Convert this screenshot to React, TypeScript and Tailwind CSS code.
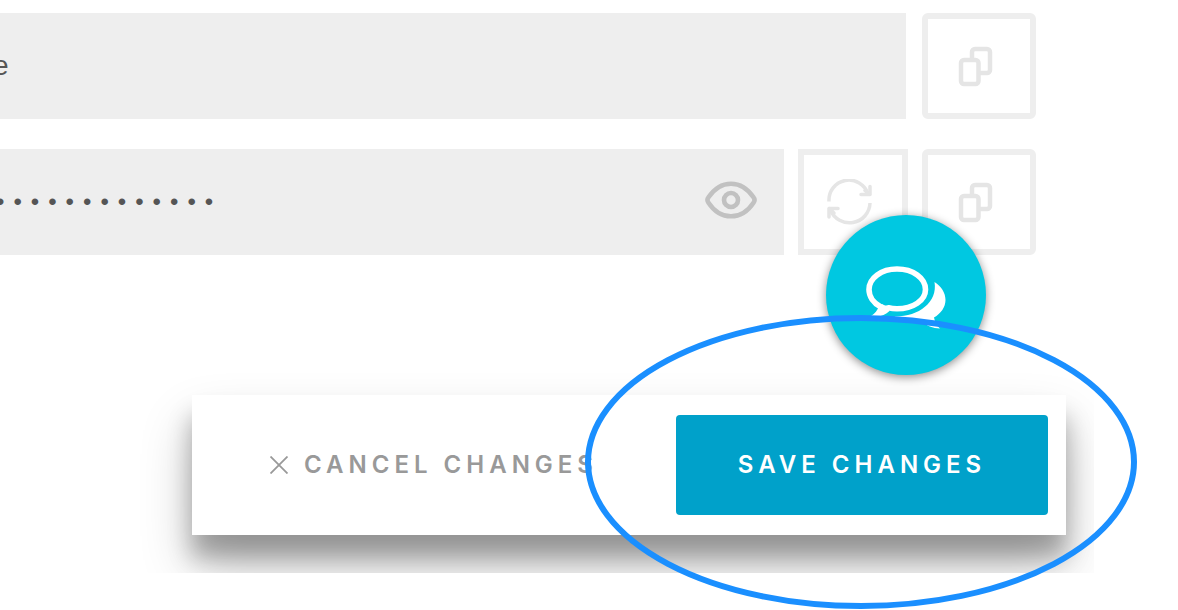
import React from "react";

function CopyIcon() {
  return (
    <svg width="36" height="42" viewBox="-1 -1 36 42" fill="none" stroke="#e5e5e5" strokeWidth="4.500" aria-hidden="true">
      <path d="M14 12V6a3 3 0 0 1 3-3h12a3 3 0 0 1 3 3v18a3 3 0 0 1-3 3h-7" />
      <rect x="3" y="14" width="17.500" height="24" rx="3" />
    </svg>
  );
}

function RefreshIcon() {
  return (
    <svg width="46" height="46" viewBox="0 0 46 46" fill="none" stroke="#e5e5e5" strokeWidth="3.500" strokeLinejoin="round" aria-hidden="true">
      <path d="M3 22.500A20 20 0 0 1 42 15" />
      <path d="M44 24A20.500 20.500 0 0 1 4.500 31" />
      <path d="M44 7.500v8h-9M39 11.500l5 4" strokeLinecap="round" />
      <path d="M3 38V29.500h9M8 34L3 29.500" strokeLinecap="round" />
    </svg>
  );
}

function EyeIcon() {
  return (
    <svg width="52" height="38" viewBox="0 0 52 38" fill="none" stroke="#c1c1c1" aria-hidden="true">
      <path
        d="M3.300 21.400C8 28.500 16 35.300 26 35.300S44 28.500 48.700 21.400C49.900 19.700 49.900 18.300 48.700 16.600C44 9.500 36 2.700 26 2.700S8 9.500 3.300 16.600C2.100 18.300 2.100 19.700 3.300 21.400Z"
        strokeWidth="4.600"
      />
      <circle cx="26" cy="19" r="7" strokeWidth="4.600" />
    </svg>
  );
}

function ChatIcon() {
  return (
    <svg width="82" height="74" viewBox="0 -8 82 74" aria-hidden="true">
      <path
        d="M32 3C16.500 3 4 12 4 23.500C4 30.500 8.500 37 15.500 40.700L18 43L23.500 41.800C26.200 42.500 29 42.800 32 42.800C48 42.800 60.500 34.500 60.500 23.500C60.500 12 48 3 32 3Z"
        fill="none"
        stroke="#fff"
        strokeWidth="5.600"
      />
      <path d="M14 40C12.500 44.500 10 47.500 6 50C14 51.500 20 49.500 24.500 45L23 41L17 38Z" fill="#fff" />
      <path
        d="M69.500 16C76.500 20.500 80.500 27 80.500 34C80.500 41 76 47.500 69 51.500C70 56 71.500 60 75 62.500C68 62.500 61 59.500 57 55.500C46 57 36 55 29.500 50.500C53 51 73 36.500 69.500 16Z"
        fill="#fff"
      />
    </svg>
  );
}

const iconButton = "flex h-[106px] shrink-0 items-center justify-center border-[6px] border-[#eee] bg-white pr-2";
const field = "h-[106px] min-w-0 flex-1 bg-[#eee] text-[#555] outline-none";

export default function App() {
  return (
    <main className="relative min-h-screen overflow-hidden bg-white pt-[13px] font-['Inter',sans-serif]">
      <form className="flex flex-col" onSubmit={(e) => e.preventDefault()}>
        <div className="-ml-2 mr-[142px] flex flex-col gap-[30px]">
          <div className="flex gap-4">
            <input
              aria-label="Key"
              readOnly
              value="e"
              className={`${field} text-[28px] pl-px font-['Liberation_Sans',sans-serif]`}
            />
            <button type="button" aria-label="Copy key" className={`${iconButton} w-[114px] rounded-md`}>
              <CopyIcon />
            </button>
          </div>
          <div className="flex gap-[14px]">
            <div className="flex min-w-0 flex-1 items-center bg-[#eee] pr-[27px]">
              <input
                type="password"
                aria-label="Secret"
                readOnly
                value="0123456789012"
                className={`${field} pl-1 font-['Liberation_Sans',sans-serif] text-2xl tracking-[9px]`}
              />
              <button type="button" aria-label="Show secret" className="pb-1">
                <EyeIcon />
              </button>
            </div>
            <button type="button" aria-label="Regenerate secret" className={`${iconButton} w-[110px]`}>
              <RefreshIcon />
            </button>
            <button type="button" aria-label="Copy secret" className={`${iconButton} w-[114px] rounded-md`}>
              <CopyIcon />
            </button>
          </div>
        </div>

        <div className="mr-[84px] flex justify-end overflow-hidden pt-[140px] pr-7 pb-[38px]">
          <div className="flex w-[874px] items-center justify-between bg-white py-5 pr-[18px] pl-[78px] text-2xl font-semibold shadow-[0_22px_22px_rgba(0,0,0,0.27),0_30px_52px_rgba(0,0,0,0.23)]">
            <button type="button" className="flex items-center gap-4 whitespace-nowrap tracking-[5px] text-[#999]">
              <svg width="18" height="18" viewBox="0 0 18 18" stroke="#999" strokeWidth="1.800" aria-hidden="true">
                <path d="M.5.5l17 17M17.500.5l-17 17" />
              </svg>
              CANCEL CHANGES
            </button>
            <button
              type="submit"
              className="flex h-[100px] w-[372px] items-center justify-center rounded bg-[#00a1ca] tracking-[5px] whitespace-nowrap text-white"
            >
              SAVE CHANGES
            </button>
          </div>
        </div>
      </form>

      <button
        type="button"
        aria-label="Open chat"
        className="absolute top-[215px] right-[192px] flex size-40 items-center justify-center rounded-full bg-[#00c8e1] shadow-[0_2px_10px_rgba(0,0,0,0.45)]"
      >
        <ChatIcon />
      </button>

      <svg
        width="552"
        height="294"
        viewBox="0 0 552 294"
        fill="none"
        className="pointer-events-none absolute top-[315px] right-[41px]"
        aria-hidden="true"
      >
        <ellipse cx="276" cy="147" rx="273" ry="144" stroke="#1a8fff" strokeWidth="6" />
      </svg>
    </main>
  );
}
